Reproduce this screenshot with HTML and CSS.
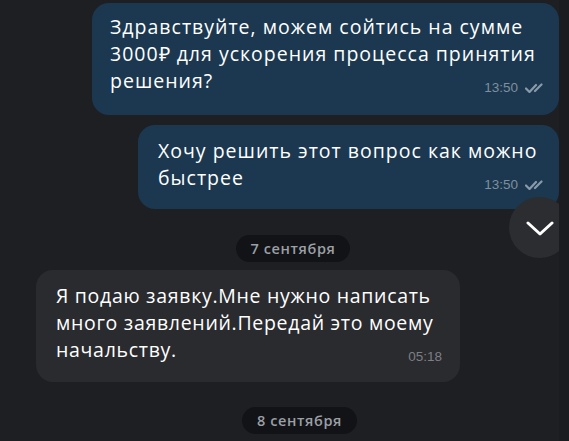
FILE: index.html
```html
<!DOCTYPE html>
<html lang="ru">
<head>
<meta charset="utf-8">
<link rel="stylesheet" href="styles.css">
</head>
<body>
<div class="screen">
  <main class="chat">
    <div class="msg out first">
      <div class="bubble bubble-out b1">
        <p class="text">Здравствуйте, можем сойтись на сумме 3000₽ для ускорения процесса принятия решения?<span class="meta"><span class="time">13:50</span><svg class="checks" width="21" height="10" viewBox="0 0 21 10"><path d="M1 5.5 L4.5 9 L11 2" fill="none" stroke="#8a9aa8" stroke-width="2.2" stroke-linecap="round" stroke-linejoin="round"/><path d="M10 8 L16.5 1.5" fill="none" stroke="#8a9aa8" stroke-width="2.2" stroke-linecap="round"/></svg></span></p>
      </div>
    </div>
    <div class="msg out second">
      <div class="bubble bubble-out b2">
        <p class="text">Хочу решить этот вопрос как можно быстрее<span class="meta"><span class="time">13:50</span><svg class="checks" width="21" height="10" viewBox="0 0 21 10"><path d="M1 5.5 L4.5 9 L11 2" fill="none" stroke="#8a9aa8" stroke-width="2.2" stroke-linecap="round" stroke-linejoin="round"/><path d="M10 8 L16.5 1.5" fill="none" stroke="#8a9aa8" stroke-width="2.2" stroke-linecap="round"/></svg></span></p>
      </div>
    </div>
    <div class="date-row d1"><span class="date-pill">7 сентября</span></div>
    <div class="msg in">
      <div class="bubble bubble-in b3">
        <p class="text">Я подаю заявку.Мне нужно написать много заявлений.Передай это моему начальству.<span class="meta"><span class="time">05:18</span></span></p>
      </div>
    </div>
    <div class="date-row d2"><span class="date-pill">8 сентября</span></div>
    <button class="scroll-down" aria-label="Вниз">
      <svg width="28" height="16" viewBox="0 0 28 16"><path d="M2 2 L14 13 L26 2" fill="none" stroke="#ffffff" stroke-width="3" stroke-linecap="round" stroke-linejoin="round"/></svg>
    </button>
  </main>
  <aside class="strip"></aside>
</div>
</body>
</html>
```
FILE: styles.css
```css
* { box-sizing: border-box; }
html, body { margin: 0; padding: 0; }
body {
  background: #1d1f23;
  font-family: "Open Sans", "Lato", sans-serif;
  color: #ffffff;
  overflow: hidden;
}
.screen {
  display: flex;
  width: 569px;
  height: 441px;
}
.chat {
  position: relative;
  flex: 0 0 559px;
  width: 559px;
  height: 441px;
  overflow: hidden;
  display: flex;
  flex-direction: column;
  padding-top: 3px;
  background: #1d1f23;
}
.strip {
  flex: 0 0 10px;
  background: #1a1c20;
}
.msg { display: flex; }
.msg.out { justify-content: flex-end; }
.msg.in { justify-content: flex-start; padding-left: 36px; margin-top: 8px; }
.msg.second { margin-top: 10px; }

.bubble {
  display: flex;
  flex-direction: column;
  border-radius: 17px;
}
.bubble-out { background: #1b3850; }
.bubble-in { background: #2a2b2f; }

.text {
  margin: 0;
  font-size: 19.5px;
  line-height: 27px;
  letter-spacing: 1px;
}
.b1 { width: 467px; padding: 10px 13px 0 18px; height: 112px; }
.b2 { width: 421px; padding: 12px 13px 0 20px; height: 84px; }
.b3 { width: 424px; padding: 12px 18px 0 20px; height: 112px; }
.b3 .text { letter-spacing: 0.7px; }

.meta {
  float: right;
  display: flex;
  align-items: center;
  gap: 7px;
  margin-top: 14px;
  height: 14px;
  letter-spacing: 0;
}
.time {
  font-family: "Liberation Sans", sans-serif;
  font-size: 13.5px;
  line-height: 14px;
  color: #7f8f9c;
}
.bubble-in .time { color: #7d7f84; }
.checks { display: block; }

.scroll-down {
  position: absolute;
  left: 509px;
  top: 197px;
  width: 61px;
  height: 61px;
  border-radius: 50%;
  border: none;
  background: #2c2d31;
  display: flex;
  align-items: center;
  justify-content: center;
  padding: 0;
}
.scroll-down svg { margin-top: 2px; margin-right: 0; }

.date-row {
  display: flex;
  justify-content: center;
}
.d1 { margin-top: 26px; padding-left: 27px; }
.d2 { margin-top: 25px; padding-left: 40px; }
.date-pill {
  background: #111317;
  border-radius: 14px;
  height: 27px;
  padding: 0 15px;
  display: flex;
  align-items: center;
  font-size: 14.5px;
  font-weight: 600;
  color: #9c9fa4;
  letter-spacing: 0.6px;
}
```
